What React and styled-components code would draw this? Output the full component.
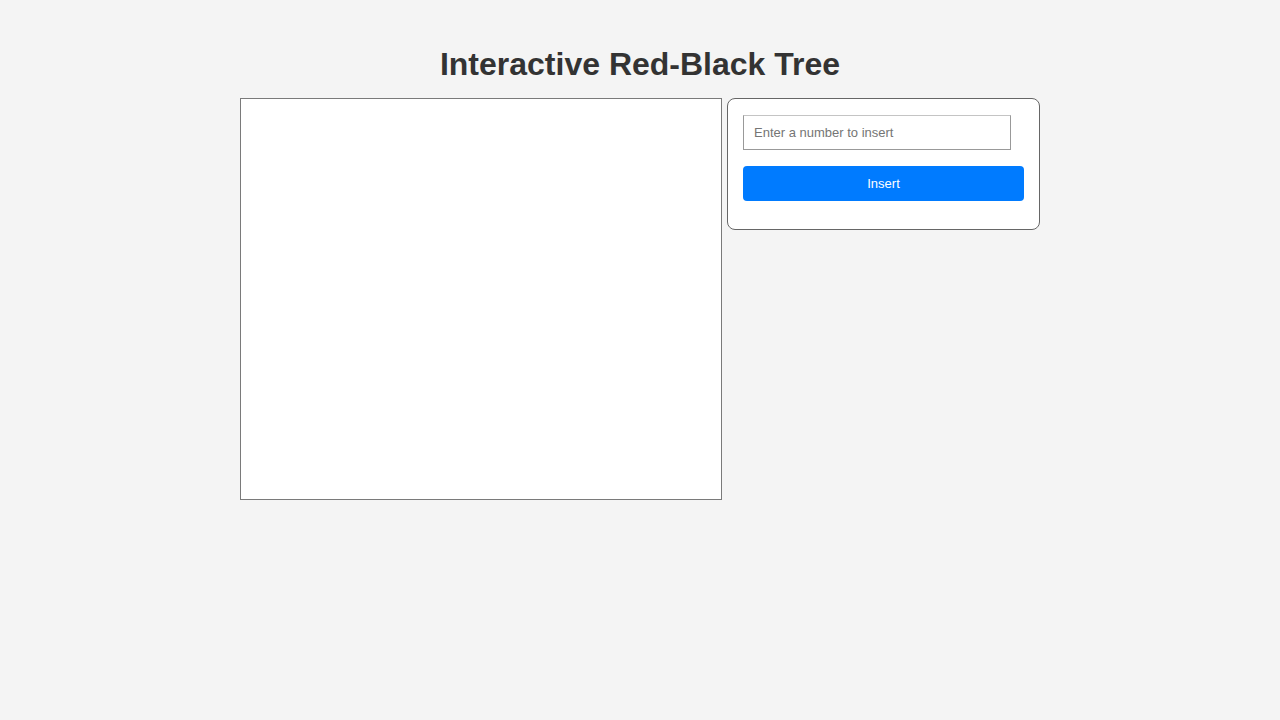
import React, { useState } from 'react';
import styled, { createGlobalStyle } from 'styled-components';

const GlobalStyle = createGlobalStyle`
  body {
    margin: 0;
    background: #f4f4f4;
    font-family: 'Liberation Sans', Arial, sans-serif;
  }
`;

const Page = styled.div`
  display: flex;
  flex-direction: column;
  align-items: center;
  padding-top: 46px;
`;

const Title = styled.h1`
  margin: 0 0 15px;
  font-size: 32px;
  line-height: 37px;
  font-weight: bold;
  color: #333333;
`;

const Layout = styled.div`
  display: flex;
  align-items: flex-start;
  gap: 5px;
`;

const TreeCanvas = styled.div`
  width: 480px;
  height: 400px;
  background: #ffffff;
  border: 1px solid #7a7a7a;
`;

const Controls = styled.div`
  width: 281px;
  padding: 16px 15px 28px 15px;
  background: #ffffff;
  border: 1px solid #666666;
  border-radius: 8px;
  display: flex;
  flex-direction: column;
  gap: 16px;
`;

const NumberInput = styled.input`
  box-sizing: border-box;
  width: 268px;
  height: 35px;
  padding: 0 10px;
  border: 1px solid #999999;
  border-top-color: #c4c4c4;
  font-family: 'Liberation Sans', Arial, sans-serif;
  font-size: 13px;
  color: #333;
  outline: none;

  &::placeholder {
    color: #757575;
  }
`;

const InsertButton = styled.button`
  height: 35px;
  border: none;
  border-radius: 4px;
  background: #007bff;
  color: #ffffff;
  font-family: 'Liberation Sans', Arial, sans-serif;
  font-size: 13px;
  cursor: pointer;
`;

export default function App() {
  const [value, setValue] = useState('');

  return (
    <>
      <GlobalStyle />
      <Page>
        <Title>Interactive Red-Black Tree</Title>
        <Layout>
          <TreeCanvas />
          <Controls>
            <NumberInput
              type="number"
              placeholder="Enter a number to insert"
              value={value}
              onChange={(e) => setValue(e.target.value)}
            />
            <InsertButton onClick={() => setValue('')}>Insert</InsertButton>
          </Controls>
        </Layout>
      </Page>
    </>
  );
}
